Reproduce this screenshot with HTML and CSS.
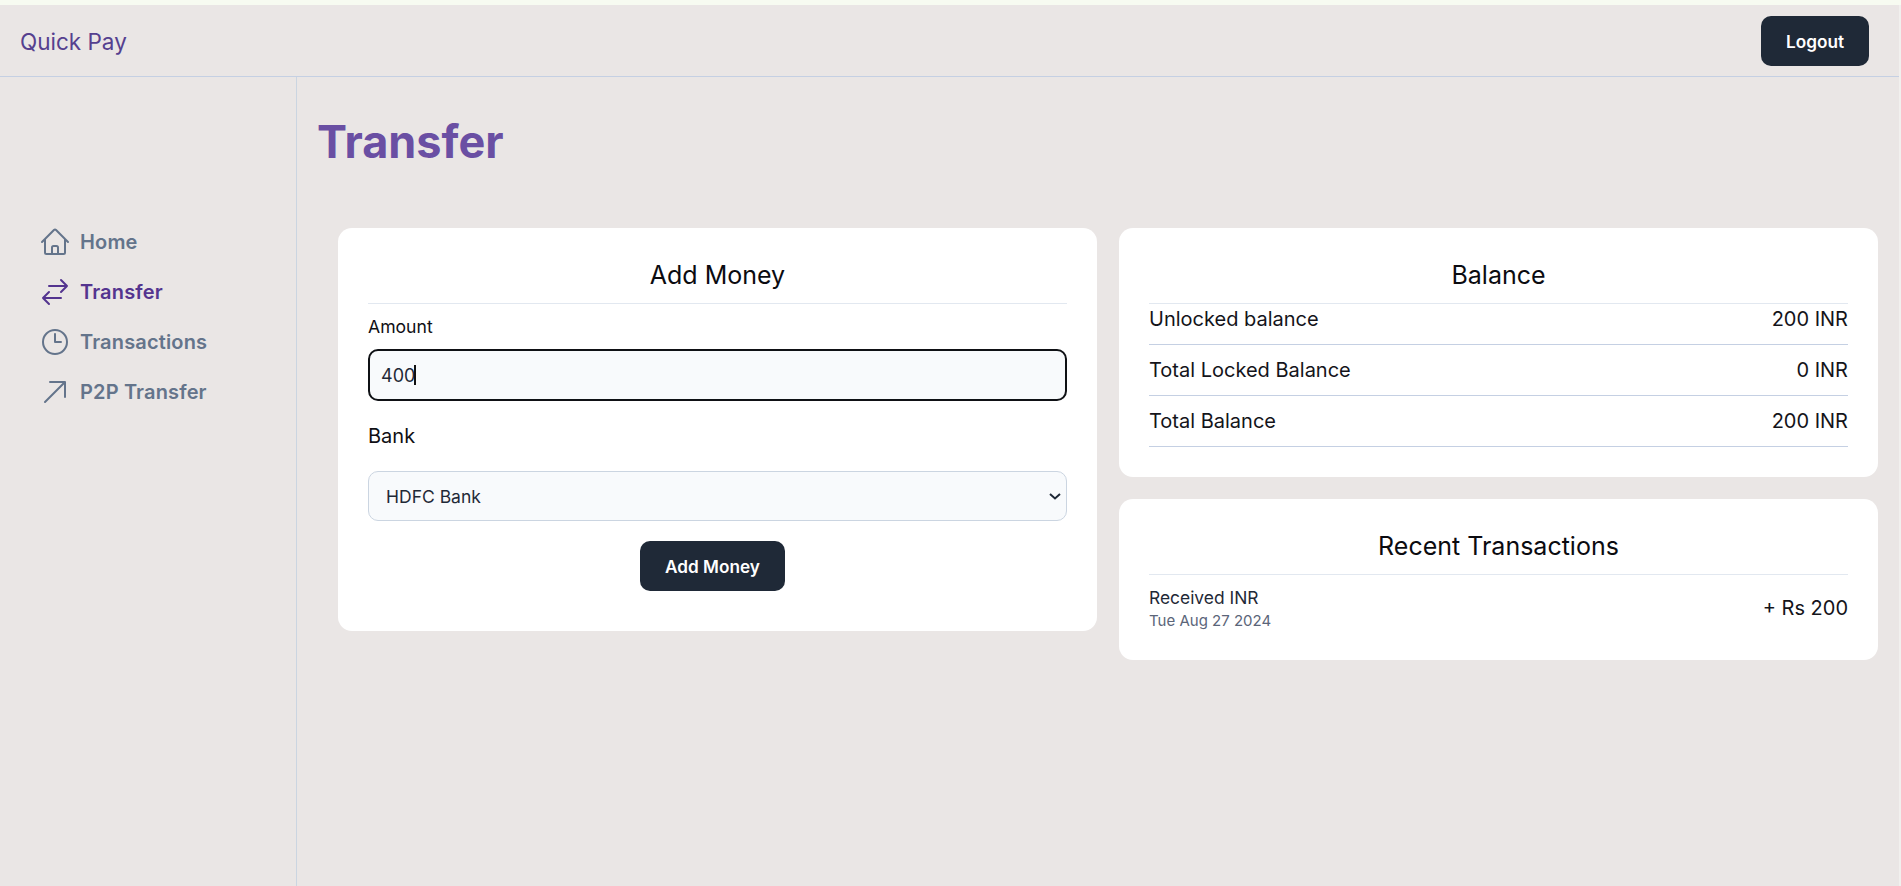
FILE: index.html
```html
<!DOCTYPE html>
<html lang="en">
<head>
<meta charset="utf-8">
<title>Quick Pay</title>
<link rel="stylesheet" href="styles.css">
</head>
<body>
<div class="strip"></div>
<header class="nav">
  <div class="brand">Quick Pay</div>
  <button class="btn btn-logout">Logout</button>
</header>
<div class="shell">
  <aside class="side">
    <a class="item"><svg class="ico" viewBox="0 0 24 24"><path d="m2.25 12 8.954-8.955c.44-.439 1.152-.439 1.591 0L21.75 12M4.5 9.75v10.125c0 .621.504 1.125 1.125 1.125H9.75v-4.875c0-.621.504-1.125 1.125-1.125h2.25c.621 0 1.125.504 1.125 1.125V21h4.125c.621 0 1.125-.504 1.125-1.125V9.75M8.25 21h8.25"/></svg>Home</a>
    <a class="item active"><svg class="ico" viewBox="0 0 24 24"><path d="M7.5 21 3 16.5m0 0L7.5 12M3 16.5h13.5m0-13.5L21 7.5m0 0L16.5 12M21 7.5H7.5"/></svg>Transfer</a>
    <a class="item"><svg class="ico" viewBox="0 0 24 24"><path d="M12 6v6h4.5m4.5 0a9 9 0 1 1-18 0 9 9 0 0 1 18 0Z"/></svg>Transactions</a>
    <a class="item"><svg class="ico" viewBox="0 0 24 24"><path d="m4.5 19.5 15-15m0 0H8.25m11.25 0v11.25"/></svg>P2P Transfer</a>
  </aside>
  <main class="main">
    <h1 class="title">Transfer</h1>
    <div class="grid">
      <section class="card">
        <h2 class="card-title">Add Money</h2>
        <label class="lbl-amount">Amount</label>
        <div class="input-wrap">
          <input class="input" type="text" value="400">
          <span class="caret"></span>
        </div>
        <div class="lbl-bank">Bank</div>
        <select class="select"><option>HDFC Bank</option><option>Axis Bank</option></select>
        <div class="actions"><button class="btn btn-add">Add Money</button></div>
      </section>
      <div class="col">
        <section class="card card-balance">
          <h2 class="card-title">Balance</h2>
          <div class="row row-first"><span>Unlocked balance</span><span>200 INR</span></div>
          <div class="row"><span>Total Locked Balance</span><span>0 INR</span></div>
          <div class="row"><span>Total Balance</span><span>200 INR</span></div>
        </section>
        <section class="card card-recent">
          <h2 class="card-title">Recent Transactions</h2>
          <div class="tx">
            <div><div class="tx-name">Received INR</div><div class="tx-date">Tue Aug 27 2024</div></div>
            <div class="tx-amt">+ Rs 200</div>
          </div>
        </section>
      </div>
    </div>
  </main>
</div>
</body>
</html>
```
FILE: styles.css
```css
* { box-sizing: border-box; }
html, body { margin: 0; height: 100%; }
body { position: relative; background: #eae6e5; font-family: Inter, "Liberation Sans", sans-serif; color: #0f0f14; overflow: hidden; display: flex; flex-direction: column; }
body::after { content: ""; position: absolute; top: 5px; right: 0; bottom: 0; width: 2px; background: #f1f0ee; }
.strip { height: 5px; background: #f7fbf1; flex: none; }
.nav { height: 72px; flex: none; display: flex; align-items: center; justify-content: space-between; padding: 1px 32px 0 20px; border-bottom: 1px solid #c5d0e3; }
.brand { font-size: 22.5px; font-weight: 400; color: #55408f; margin-top: 1px; }
.btn { background: #1f2937; color: #fff; border: 0; font-family: inherit; font-weight: 600; font-size: 17.2px; border-radius: 10px; padding-top: 1px; }
.btn-logout { width: 108px; height: 50px; }
.shell { flex: 1; display: flex; min-height: 0; }
.side { width: 297px; flex: none; border-right: 1px solid #cbd5e1; padding: 140px 0 0 39px; display: flex; flex-direction: column; }
.item { height: 50px; display: flex; align-items: center; gap: 9px; font-size: 20px; font-weight: 600; letter-spacing: .15px; color: #64748b; }
.item.active { color: #54348f; }
.ico { width: 32px; height: 32px; fill: none; stroke: currentColor; stroke-width: 1.5; stroke-linecap: round; stroke-linejoin: round; flex: none; }
.main { flex: 1; min-width: 0; padding: 0 23px 0 20px; }
.title { margin: 37px 0 0; font-size: 45px; line-height: 56px; font-weight: 700; color: #6a4fa3; }
.grid { margin: 58px 0 0 21px; display: grid; grid-template-columns: 759px 759px; column-gap: 22px; align-items: start; }
.col { display: flex; flex-direction: column; gap: 22px; }
.card { background: #fff; border-radius: 14px; padding: 30px; }
.card-title { margin: 0; height: 46px; padding-top: 1px; border-bottom: 1px solid #e2e8f0; text-align: center; font-size: 25px; line-height: 32px; font-weight: 400; color: #0b0b10; }
.lbl-amount { display: block; margin-top: 11px; font-size: 17.6px; line-height: 24px; font-weight: 400; }
.input-wrap { position: relative; margin-top: 10px; }
.input { display: block; width: 100%; height: 52px; background: #f8fafc; border: 2px solid #0f1115; border-radius: 10px; padding: 0 11px; font: 400 18px Inter, sans-serif; color: #1f2937; outline: none; }
.caret { position: absolute; left: 46px; top: 16px; width: 2px; height: 20px; background: #111; }
.lbl-bank { margin-top: 21px; font-size: 20px; line-height: 28px; font-weight: 400; }
.select { display: block; width: 100%; height: 50px; margin-top: 21px; appearance: none; background: #f8fafc url("data:image/svg+xml,%3Csvg xmlns='http://www.w3.org/2000/svg' width='12' height='7' viewBox='0 0 12 7'%3E%3Cpath d='M1 1l5 4.5L11 1' fill='none' stroke='%231f2937' stroke-width='2'/%3E%3C/svg%3E") no-repeat right 5px center; border: 1px solid #cbd5e1; border-radius: 10px; padding: 0 17px; font: 400 17.5px Inter, sans-serif; color: #1f2937; }
.actions { display: flex; justify-content: center; margin-top: 20px; padding-right: 10px; padding-bottom: 10px; }
.btn-add { width: 145px; height: 50px; }
.row { height: 51px; display: flex; justify-content: space-between; align-items: center; border-bottom: 1px solid #c5d0e3; font-size: 20px; font-weight: 400; color: #14141a; }
.row-first { height: 41px; padding-bottom: 10px; }
.card-balance { padding-bottom: 30px; }
.card-recent { padding-bottom: 29px; }
.tx { display: flex; justify-content: space-between; align-items: center; padding-top: 12px; }
.tx-name { font-size: 17.4px; line-height: 22px; font-weight: 400; color: #1f2937; }
.tx-date { font-size: 15px; line-height: 20px; font-weight: 400; color: #5b6579; margin-top: 2px; }
.tx-amt { font-size: 20px; font-weight: 400; color: #14141a; margin-bottom: 2px; }
```
